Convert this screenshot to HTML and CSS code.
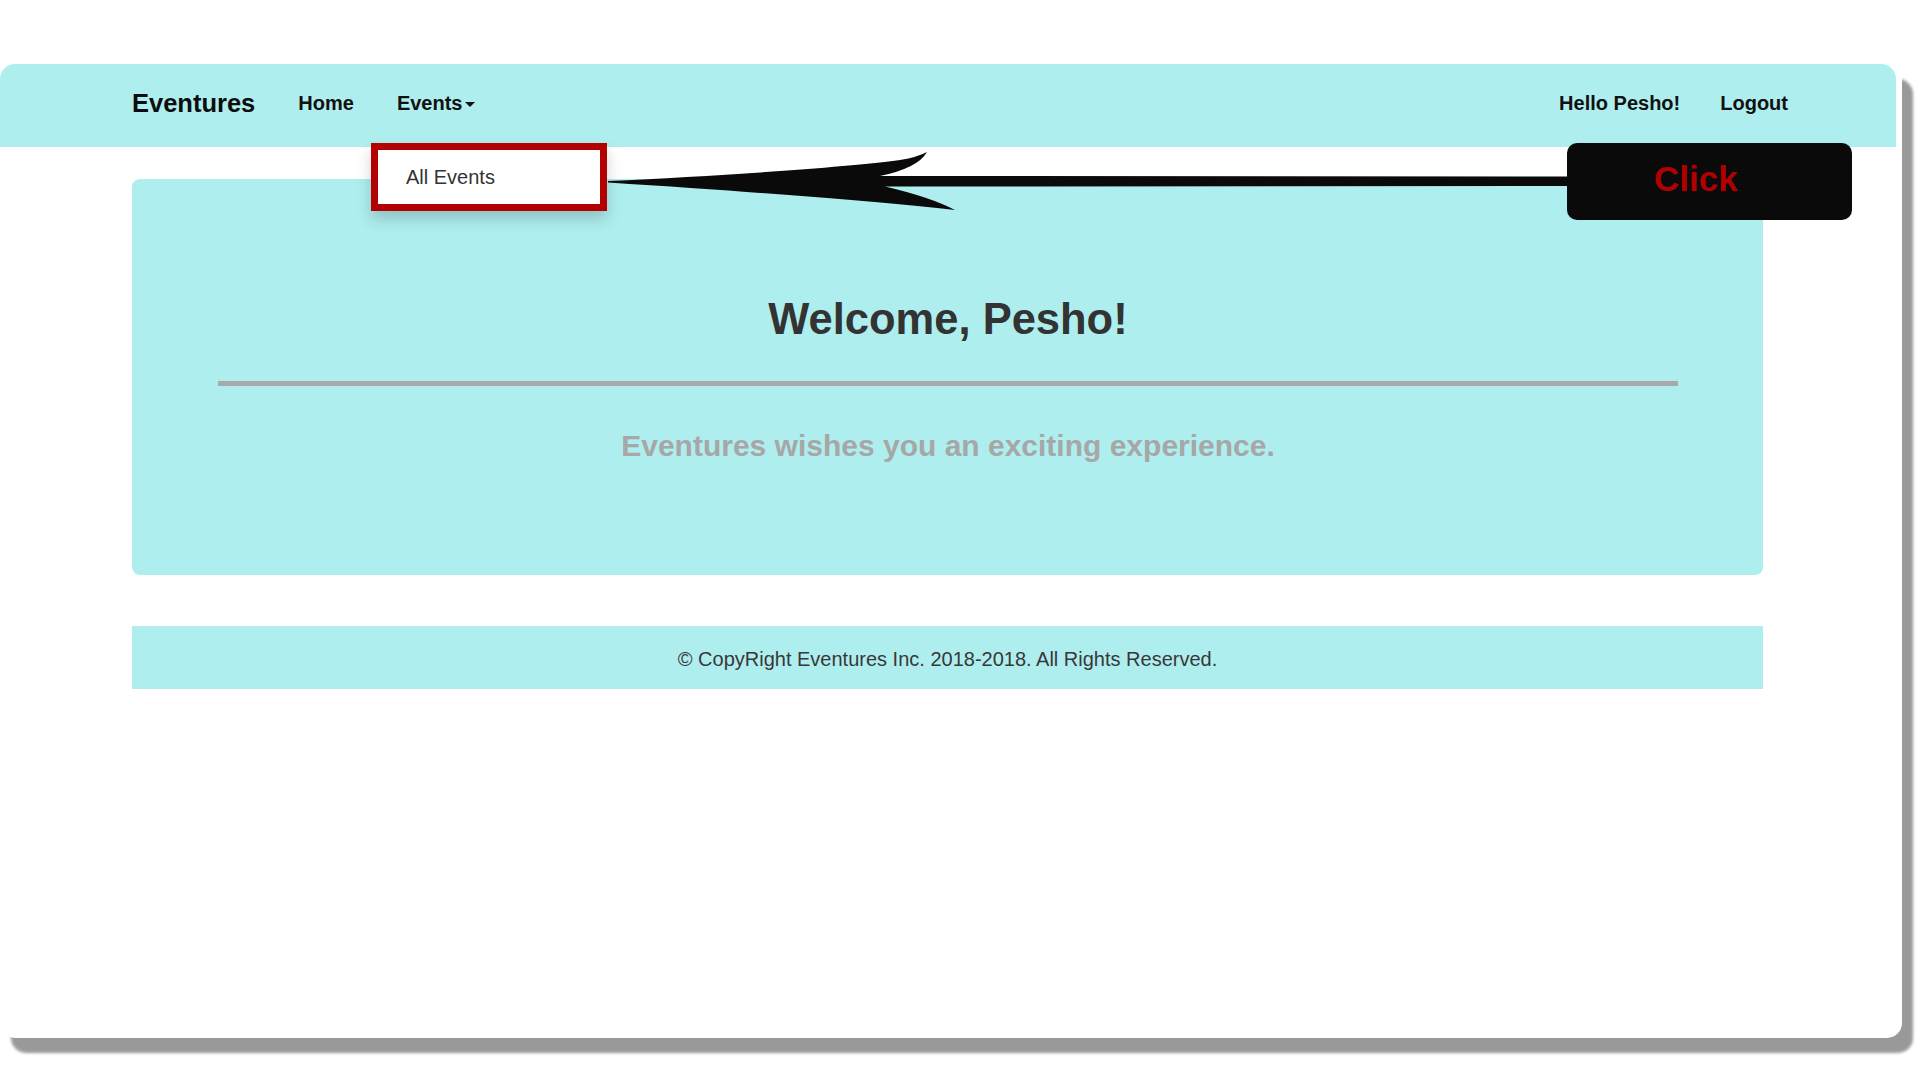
FILE: index.html
```html
<!DOCTYPE html>
<html lang="en">
<head>
<meta charset="utf-8">
<title>Eventures</title>
<link rel="stylesheet" href="styles.css">
</head>
<body>
<div class="stage">
  <div class="frame">
    <nav class="navbar">
      <a class="brand" href="#">Eventures</a>
      <div class="nav-left">
        <a class="nav-link" href="#">Home</a>
        <a class="nav-link" href="#">Events<span class="caret"></span></a>
      </div>
      <div class="nav-right">
        <a class="nav-link" href="#">Hello Pesho!</a>
        <a class="nav-link" href="#">Logout</a>
      </div>
    </nav>

    <main class="container">
      <section class="jumbotron">
        <h1 class="welcome">Welcome, Pesho!</h1>
        <div class="rule"></div>
        <p class="lead">Eventures wishes you an exciting experience.</p>
      </section>
      <footer class="footer">© CopyRight Eventures Inc. 2018-2018. All Rights Reserved.</footer>
    </main>

    <div class="dropdown"><a class="dropdown-item" href="#">All Events</a></div>

    <svg class="arrow" width="970" height="70" viewBox="0 0 970 70" aria-hidden="true">
      <path d="M8,36 C120,31 250,22 300,15 Q318,12 327,7 Q318,23 280,31 L970,31.5 L970,41 L285,41.5 Q330,52 355,65 Q250,53 8,37.5 Z" fill="#0a0a0a"/>
    </svg>

    <div class="callout">Click</div>
  </div>
</div>
</body>
</html>
```

FILE: styles.css
```css
html, body {
  margin: 0;
  padding: 0;
  background: #ffffff;
}

body {
  font-family: "Liberation Sans", Arial, sans-serif;
  color: #333;
}

a {
  text-decoration: none;
  color: inherit;
}

.stage {
  padding-top: 64px;
  width: 1920px;
  height: 1016px;
}

.frame {
  position: relative;
  width: 1902px;
  height: 974px;
  background: #ffffff;
  border-radius: 15px;
  box-shadow: 11px 15px 3px rgba(0, 0, 0, 0.4);
}

.navbar {
  display: flex;
  align-items: center;
  height: 83px;
  margin-right: 6px;
  padding: 0 108px 0 132px;
  background: #afeeee;
  border-radius: 15px 15px 0 0;
  box-sizing: border-box;
}

.brand {
  font-size: 25.5px;
  font-weight: bold;
  color: #0d0d0d;
  margin-right: 43px;
  margin-top: -4px;
}

.nav-left,
.nav-right {
  display: flex;
  align-items: center;
  gap: 43px;
  margin-top: -4px;
}

.nav-right {
  margin-left: auto;
  gap: 40px;
}

.nav-link {
  font-size: 20px;
  font-weight: bold;
  color: #111;
  display: flex;
  align-items: center;
}

.caret {
  display: inline-block;
  width: 0;
  height: 0;
  margin-left: 3px;
  margin-top: 2px;
  border-left: 5px solid transparent;
  border-right: 5px solid transparent;
  border-top: 5px solid #111;
}

.container {
  width: 1631px;
  margin: 32px 0 0 132px;
}

.jumbotron {
  height: 396px;
  box-sizing: border-box;
  padding: 116px 85px 0 86px;
  background: #afeeee;
  border-radius: 8px;
  text-align: center;
}

.welcome {
  margin: 0;
  font-size: 43.5px;
  line-height: 48px;
  font-weight: bold;
  color: #333;
}

.rule {
  margin-top: 38px;
  height: 5px;
  background: #a9a9a9;
}

.lead {
  margin: 42px 0 0;
  font-size: 30px;
  line-height: 36px;
  font-weight: bold;
  color: #a7a7a7;
}

.footer {
  margin-top: 51px;
  height: 63px;
  box-sizing: border-box;
  padding-top: 4px;
  display: flex;
  align-items: center;
  justify-content: center;
  background: #afeeee;
  font-size: 20px;
  color: #383838;
}

.dropdown {
  position: absolute;
  left: 371px;
  top: 79px;
  width: 236px;
  height: 68px;
  box-sizing: border-box;
  border: 7px solid #b30000;
  background: #ffffff;
  box-shadow: 0 8px 14px rgba(0, 0, 0, 0.18);
  display: flex;
  align-items: center;
}

.dropdown-item {
  padding-left: 28px;
  font-size: 20px;
  color: #333;
}

.arrow {
  position: absolute;
  left: 600px;
  top: 81px;
}

.callout {
  position: absolute;
  left: 1567px;
  top: 79px;
  width: 285px;
  height: 77px;
  box-sizing: border-box;
  padding: 0 0 6px 87px;
  display: flex;
  align-items: center;
  background: #0a0a0a;
  border-radius: 10px;
  font-size: 35px;
  font-weight: bold;
  color: #b00000;
}
```
